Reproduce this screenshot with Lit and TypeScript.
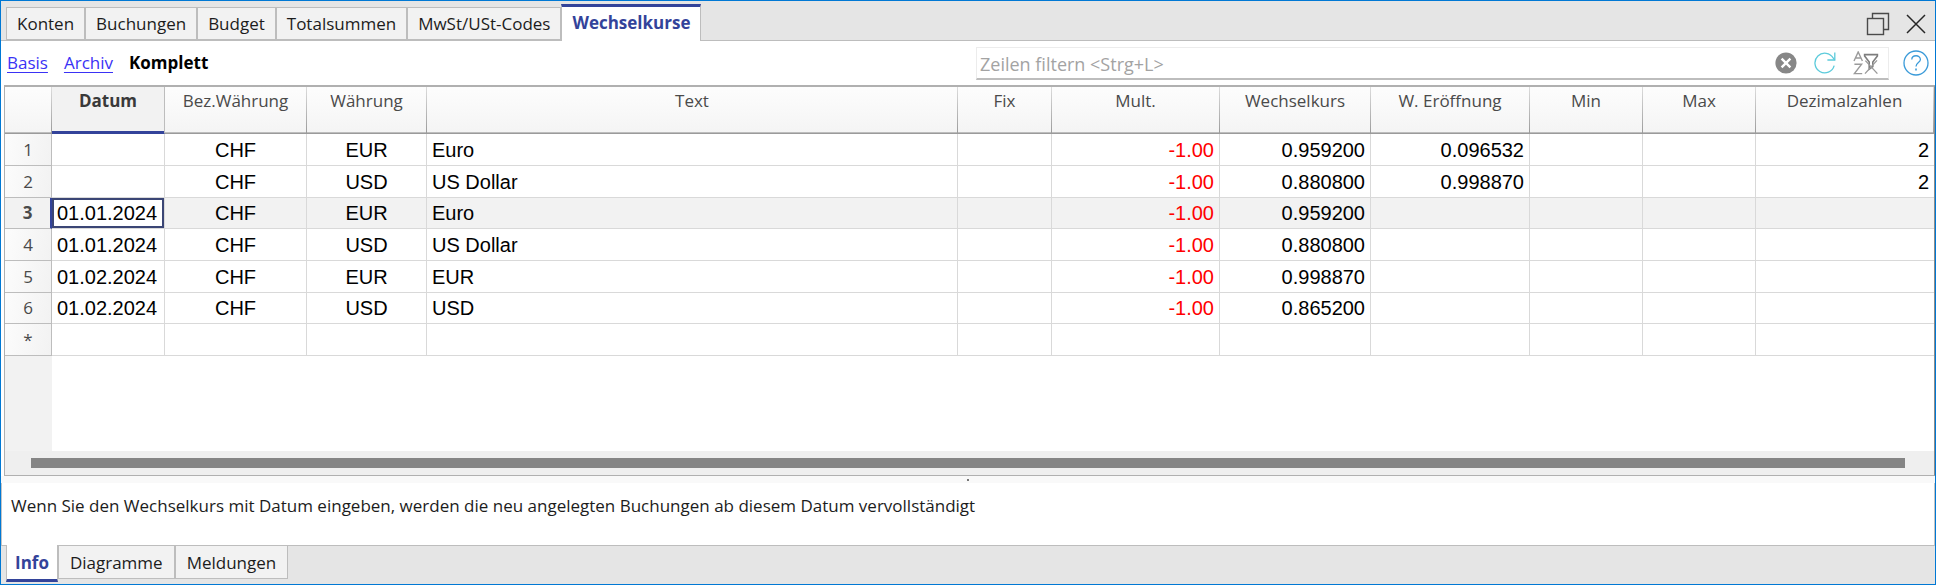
import { LitElement, html, css, svg } from "lit";
import { customElement, property, state } from "lit/decorators.js";
import { classMap } from "lit/directives/class-map.js";

interface Column {
  key: string;
  label: string;
  width?: number;
  align: "left" | "center" | "right";
}

interface Rate {
  [key: string]: string;
}

const COLUMNS: Column[] = [
  { key: "datum", label: "Datum", width: 113, align: "left" },
  { key: "bez", label: "Bez.Währung", width: 142, align: "center" },
  { key: "waehrung", label: "Währung", width: 120, align: "center" },
  { key: "text", label: "Text", align: "left" },
  { key: "fix", label: "Fix", width: 94, align: "center" },
  { key: "mult", label: "Mult.", width: 168, align: "right" },
  { key: "kurs", label: "Wechselkurs", width: 151, align: "right" },
  { key: "eroeffnung", label: "W. Eröffnung", width: 159, align: "right" },
  { key: "min", label: "Min", width: 113, align: "right" },
  { key: "max", label: "Max", width: 113, align: "right" },
  { key: "dezimal", label: "Dezimalzahlen", width: 178, align: "right" },
];

const RATES: Rate[] = [
  { bez: "CHF", waehrung: "EUR", text: "Euro", mult: "-1.00", kurs: "0.959200", eroeffnung: "0.096532", dezimal: "2" },
  { bez: "CHF", waehrung: "USD", text: "US Dollar", mult: "-1.00", kurs: "0.880800", eroeffnung: "0.998870", dezimal: "2" },
  { datum: "01.01.2024", bez: "CHF", waehrung: "EUR", text: "Euro", mult: "-1.00", kurs: "0.959200" },
  { datum: "01.01.2024", bez: "CHF", waehrung: "USD", text: "US Dollar", mult: "-1.00", kurs: "0.880800" },
  { datum: "01.02.2024", bez: "CHF", waehrung: "EUR", text: "EUR", mult: "-1.00", kurs: "0.998870" },
  { datum: "01.02.2024", bez: "CHF", waehrung: "USD", text: "USD", mult: "-1.00", kurs: "0.865200" },
  {},
];

const restoreIcon = svg`<svg width="24" height="24" viewBox="0 0 24 24" fill="none" stroke="#4a4a4a" stroke-width="1.4">
  <rect x="1.5" y="6.5" width="16" height="16" />
  <path d="M6.5 6.5V1.5H22.5V17.5H17.5" />
</svg>`;

const closeIcon = svg`<svg width="20" height="20" viewBox="0 0 20 20" fill="none" stroke="#262626" stroke-width="1.5">
  <path d="M1 1L19 19M19 1L1 19" />
</svg>`;

const clearIcon = svg`<svg width="22" height="22" viewBox="0 0 22 22" fill="none">
  <circle cx="11" cy="11" r="10.6" fill="#878787" />
  <path d="M6.6 6.6L15.4 15.4M15.4 6.6L6.6 15.4" stroke="#fff" stroke-width="2.4" />
</svg>`;

const refreshIcon = svg`<svg width="22" height="22" viewBox="0 0 22 22" fill="none" stroke="#5ccbdb" stroke-width="1.3">
  <path d="M20.2 13.6A9.8 9.8 0 1 1 19.3 6.2L20.8 8" />
  <path d="M20.8 0.5V8H13.4" />
</svg>`;

const sortFilterIcon = svg`<svg width="26" height="24" viewBox="0 0 26 24" fill="none" stroke="#9a9a9a" stroke-width="1.4">
  <path d="M1 10L5.2 1L9.4 10M2.5 7H7.9" />
  <path d="M1.4 13.2H8.6L1.4 22.6H9.2" />
  <path d="M11.6 3.6H24.4V5L19.8 11V15.6L16.2 18.2V11L11.6 5Z" stroke="#7d7d7d" stroke-width="1.6" />
  <path d="M12 22.6L24 9.4M12.4 9.6L24.4 22.6" />
</svg>`;

const helpIcon = svg`<svg width="26" height="26" viewBox="0 0 26 26" fill="none" stroke="#3b9bd9" stroke-width="1.3">
  <circle cx="13" cy="13" r="12" />
  <path d="M8.8 9.6C8.8 4.4 17.4 4.6 17.4 9.4C17.4 12.4 13 12.6 13 16.4" />
  <path d="M13 18.4V20.4" stroke-width="1.6" />
</svg>`;

@customElement("tab-strip")
export class TabStrip extends LitElement {
  @property({ type: Array }) tabs: string[] = [];
  @property() active = "";
  @property() placement: "top" | "bottom" = "top";

  static styles = css`
    :host {
      display: block;
    }
    .strip {
      display: flex;
      padding-left: 5px;
    }
    .top {
      align-items: flex-end;
      height: 100%;
    }
    .bottom {
      align-items: flex-start;
    }
    .tab {
      box-sizing: border-box;
      height: 33px;
      font: 17px/22px "Open Sans", "Noto Sans", sans-serif;
      color: #1c1c1c;
      background: #f2f2f2;
      border: 1px solid #bdbdbd;
      margin: 0;
      white-space: nowrap;
      padding: 5px 10px 4px;
      cursor: default;
    }
    .bottom .tab {
      padding: 5px 11px 4px;
      border-top: 0;
    }
    .tab.active {
      background: #fff;
      color: #33439a;
      font-weight: 700;
    }
    .top .active {
      height: 37px;
      margin-bottom: -1px;
      padding: 5px 10px 7px;
      border-top: 3px solid #33439a;
      border-bottom: 0;
    }
    .bottom .active {
      height: 37px;
      margin-top: -1px;
      padding: 6px 8px 5px;
      border-bottom: 3px solid #33439a;
    }
  `;

  render() {
    return html`<div class="strip ${this.placement}" role="tablist">
      ${this.tabs.map(
        (t) => html`<button
          role="tab"
          aria-selected=${t === this.active ? "true" : "false"}
          class=${classMap({ tab: true, active: t === this.active })}
          @click=${() => {
            this.active = t;
          }}
        >${t}</button>`
      )}
    </div>`;
  }
}

@customElement("rate-table")
export class RateTable extends LitElement {
  @state() private row = 2;
  @state() private col = "datum";

  static styles = css`
    :host {
      display: flex;
      flex-direction: column;
      overflow: hidden;
      background: linear-gradient(90deg, #f2f2f2 47px, #fff 47px);
    }
    table {
      width: 100%;
      table-layout: fixed;
      border-collapse: separate;
      border-spacing: 0;
      background: #fff;
    }
    th,
    td {
      box-sizing: border-box;
      padding: 0 5px;
      overflow: hidden;
      white-space: nowrap;
    }
    .corner {
      width: 47px;
    }
    thead th {
      height: 47px;
      padding-top: 2px;
      vertical-align: top;
      font: 17px/24px "Open Sans", "Noto Sans", sans-serif;
      color: #4a4a4a;
      background: linear-gradient(#fdfdfd, #f4f4f4);
      border-right: 1px solid;
      border-image: linear-gradient(#dedede, #9a9a9a) 1;
      border-bottom: 1px solid;
      box-shadow: inset 0 -1px #bdbdbd;
    }
    thead .current {
      background: #f2f2f2;
      color: #3a3a3a;
      font-weight: 700;
      box-shadow: inset 0 -2px #33439a;
      border-image: none;
      border-right-color: #bdbdbd;
      border-bottom-color: #33439a;
    }
    tbody th {
      font: 17px/24px "Open Sans", "Noto Sans", sans-serif;
      color: #4a4a4a;
      text-align: center;
      background: linear-gradient(100deg, #fcfcfc, #f2f2f2);
      border-right: 1px solid #bdbdbd;
      border-bottom: 1px solid #bdbdbd;
    }
    tbody tr {
      height: 32px;
    }
    tbody tr:nth-child(3n) {
      height: 31px;
    }
    td {
      font: 20px/24px "Liberation Sans", Arial, sans-serif;
      color: #000;
      border-right: 1px solid #d9d9d9;
      border-bottom: 1px solid #d9d9d9;
    }
    td:last-child {
      border-right: 0;
    }
    .left {
      text-align: left;
    }
    .center {
      text-align: center;
    }
    .right {
      text-align: right;
    }
    .negative {
      color: #f00;
    }
    .selected td {
      background: #f2f2f2;
    }
    .selected th {
      font-weight: 700;
      background: #f2f2f2;
      border-right: 2px solid #33439a;
    }
    .selected .cell {
      background: #fff;
      box-shadow: inset 0 0 0 2px #3b4675;
    }
  `;

  render() {
    return html`<table>
      <colgroup>
        <col class="corner" />
        ${COLUMNS.map((c) => (c.width ? html`<col style="width:${c.width}px" />` : html`<col />`))}
      </colgroup>
      <thead>
        <tr>
          <th></th>
          ${COLUMNS.map((c) => html`<th scope="col" class=${c.key === this.col ? "current" : ""}>${c.label}</th>`)}
        </tr>
      </thead>
      <tbody>
        ${RATES.map(
          (r, i) => html`<tr class=${i === this.row ? "selected" : ""}>
            <th scope="row">${i === RATES.length - 1 ? "*" : i + 1}</th>
            ${COLUMNS.map(
              (c) => html`<td
                class=${classMap({
                  [c.align]: true,
                  negative: (r[c.key] ?? "").startsWith("-"),
                  cell: i === this.row && c.key === this.col,
                })}
                @click=${() => {
                  this.row = i;
                  this.col = c.key;
                }}
              >${r[c.key] ?? ""}</td>`
            )}
          </tr>`
        )}
      </tbody>
    </table>`;
  }
}

@customElement("app-root")
export class AppRoot extends LitElement {
  static styles = css`
    :host {
      display: flex;
      flex-direction: column;
      box-sizing: border-box;
      height: 100vh;
      border: 1px solid #0078d4;
      background: #fff;
      overflow: hidden;
      font: 17px/24px "Open Sans", "Noto Sans", sans-serif;
    }
    button {
      display: flex;
      padding: 0;
      border: 0;
      background: none;
    }
    .titlebar {
      display: flex;
      justify-content: space-between;
      box-sizing: border-box;
      height: 40px;
      background: #e5e5e5;
      border-bottom: 1px solid #bdbdbd;
    }
    .window {
      display: flex;
      align-items: center;
      gap: 16px;
      padding: 6px 9px 0 0;
    }
    .toolbar {
      display: grid;
      grid-template-columns: 1fr 1fr;
      align-items: center;
      height: 44px;
    }
    .views {
      display: flex;
      gap: 16px;
      padding-left: 6px;
    }
    .views a {
      color: #3a32f5;
      text-decoration: underline;
      text-underline-offset: 3px;
    }
    .views strong {
      color: #000;
    }
    .search {
      display: flex;
      align-items: center;
      gap: 14px;
      padding: 0 6px 0 8px;
    }
    .field {
      flex: 1;
      display: flex;
      align-items: center;
      gap: 17px;
      box-sizing: border-box;
      height: 33px;
      min-width: 0;
      padding-right: 9px;
      border: 1px solid #ececec;
      border-bottom: 2px solid #bdbdbd;
    }
    .filter {
      flex: 1;
      min-width: 0;
      padding: 2px 3px 0;
      border: 0;
      outline: 0;
      background: none;
      font: 18px/24px "Open Sans", "Noto Sans", sans-serif;
    }
    .filter::placeholder {
      color: #a3a3a3;
      opacity: 1;
    }
    .sheet {
      flex: 1;
      min-height: 0;
      display: flex;
      flex-direction: column;
      margin-left: 3px;
      border: 1px solid #b0b0b0;
      border-top-width: 2px;
      border-right-color: #8c8c8c;
    }
    .grid {
      flex: 1;
      min-height: 0;
    }
    .scroll {
      height: 10px;
      padding: 7px 29px 7px 26px;
      background: #efefef;
    }
    .thumb {
      height: 10px;
      background: #858585;
    }
    .splitter {
      display: flex;
      justify-content: center;
      align-items: center;
      height: 7px;
      background: #f9f9f9;
    }
    .grip {
      width: 2px;
      height: 2px;
      background: #777;
    }
    .info {
      padding: 11px 9px 27px;
      border-left: 1px solid #c4c4c4;
      border-right: 1px solid #c4c4c4;
      border-bottom: 1px solid #bdbdbd;
      color: #1c1c1c;
    }
    .info p {
      margin: 0;
    }
    .footer {
      height: 38px;
      background: #e5e5e5;
    }
  `;

  render() {
    return html`
      <div class="titlebar">
        <tab-strip
          .tabs=${["Konten", "Buchungen", "Budget", "Totalsummen", "MwSt/USt-Codes", "Wechselkurse"]}
          active="Wechselkurse"
        ></tab-strip>
        <div class="window">
          <button aria-label="Fenster wiederherstellen">${restoreIcon}</button>
          <button aria-label="Schliessen">${closeIcon}</button>
        </div>
      </div>
      <div class="toolbar">
        <nav class="views">
          <a href="#basis">Basis</a>
          <a href="#archiv">Archiv</a>
          <strong>Komplett</strong>
        </nav>
        <div class="search">
          <div class="field">
            <input class="filter" type="text" aria-label="Zeilen filtern" placeholder="Zeilen filtern <Strg+L>" />
            <button aria-label="Filter löschen">${clearIcon}</button>
            <button aria-label="Aktualisieren">${refreshIcon}</button>
            <button aria-label="Sortierung und Filter entfernen">${sortFilterIcon}</button>
          </div>
          <button aria-label="Hilfe">${helpIcon}</button>
        </div>
      </div>
      <div class="sheet">
        <rate-table class="grid"></rate-table>
        <div class="scroll"><div class="thumb"></div></div>
      </div>
      <div class="splitter"><div class="grip"></div></div>
      <div class="info">
        <p>Wenn Sie den Wechselkurs mit Datum eingeben, werden die neu angelegten Buchungen ab diesem Datum vervollständigt</p>
      </div>
      <tab-strip class="footer" .tabs=${["Info", "Diagramme", "Meldungen"]} active="Info" placement="bottom"></tab-strip>
    `;
  }
}
